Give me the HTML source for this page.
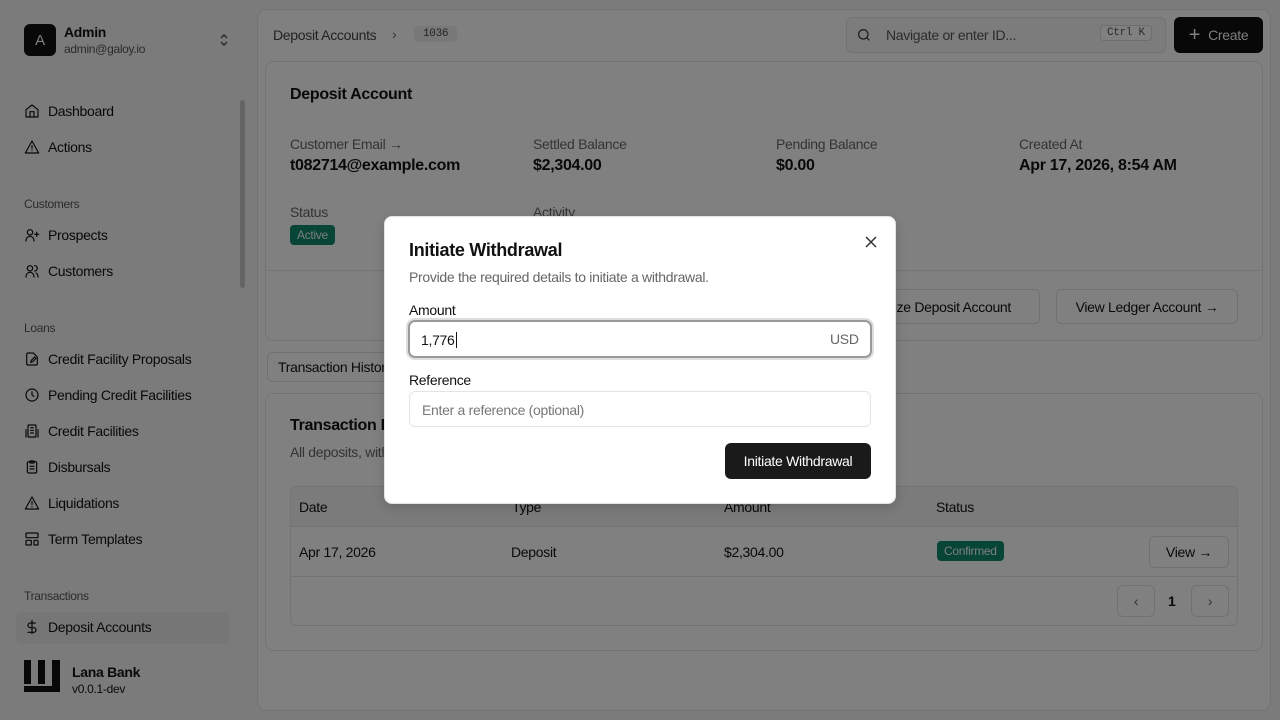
<!DOCTYPE html>
<html><head><meta charset="utf-8"><style>
*{box-sizing:border-box;margin:0;padding:0}
body{width:1280px;height:720px;overflow:hidden;background:#7b7b7b;font-family:"Liberation Sans",sans-serif;color:#090909;font-size:14px;position:relative;letter-spacing:-0.3px}
.abs{position:absolute}
.nav{position:absolute;left:24px;display:flex;align-items:center;gap:8px;font-size:14px;color:#090909}
.nav svg{width:16px;height:16px;fill:none;stroke:#090909;stroke-width:1.8;stroke-linecap:round;stroke-linejoin:round}
.sec{position:absolute;left:24px;font-size:12px;color:#2b2b2b}
.card{position:absolute;background:#808080;border:1px solid #737373;border-radius:8px}
.lbl{position:absolute;font-size:14px;color:#333}
.val{position:absolute;font-size:16px;font-weight:bold;color:#090909}
.btn{position:absolute;border:1px solid #717171;border-radius:6px;background:#808080;font-size:14px;display:flex;align-items:center;justify-content:center;gap:6px;color:#090909}
.badge{position:absolute;background:#074537;color:#7f7f7f;font-size:12px;border-radius:4px;padding:3px 7px}
</style></head><body>
<!-- sidebar -->
<div class="abs" style="left:24px;top:24px;width:32px;height:32px;background:#080808;border-radius:6px;color:#808080;display:flex;align-items:center;justify-content:center;font-size:15px">A</div>
<div class="abs" style="left:64px;top:24px;font-size:14px;font-weight:bold">Admin</div>
<div class="abs" style="left:64px;top:42px;font-size:12px;color:#2b2b2b">admin@galoy.io</div>
<svg class="abs" style="left:217px;top:32px" width="14" height="16" viewBox="0 0 14 16" fill="none" stroke="#2b2b2b" stroke-width="1.5"><path d="M4 6l3-3 3 3M4 10l3 3 3-3"/></svg>
<div class="abs" style="left:240px;top:100px;width:5px;height:188px;background:#646464;border-radius:3px"></div>
<div class="nav" style="top:103px"><svg viewBox="0 0 24 24"><path d="M3 10l9-7 9 7v10a1 1 0 0 1-1 1H4a1 1 0 0 1-1-1z"/><path d="M9 21v-8h6v8"/></svg>Dashboard</div>
<div class="nav" style="top:139px"><svg viewBox="0 0 24 24"><path d="M12 3l10 18H2z"/><path d="M12 10v4M12 17v.5"/></svg>Actions</div>
<div class="sec" style="top:197px">Customers</div>
<div class="nav" style="top:227px"><svg viewBox="0 0 24 24"><circle cx="9" cy="8" r="4"/><path d="M3 21v-1a6 6 0 0 1 12 0v1M19 8v6M16 11h6"/></svg>Prospects</div>
<div class="nav" style="top:263px"><svg viewBox="0 0 24 24"><circle cx="9" cy="8" r="4"/><path d="M3 21v-1a6 6 0 0 1 12 0v1M16 4a4 4 0 0 1 0 8M21 21v-1a6 6 0 0 0-3-5"/></svg>Customers</div>
<div class="sec" style="top:321px">Loans</div>
<div class="nav" style="top:351px"><svg viewBox="0 0 24 24"><path d="M14 3H6a2 2 0 0 0-2 2v14a2 2 0 0 0 2 2h12a2 2 0 0 0 2-2V9z"/><path d="M10 17l1-3 5-5 2 2-5 5z"/></svg>Credit Facility Proposals</div>
<div class="nav" style="top:387px"><svg viewBox="0 0 24 24"><circle cx="12" cy="12" r="9"/><path d="M12 7v5l3 2"/></svg>Pending Credit Facilities</div>
<div class="nav" style="top:423px"><svg viewBox="0 0 24 24"><rect x="6" y="3" width="12" height="18" rx="1"/><path d="M3 10v11M21 10v11M10 7h4M10 11h4M10 15h4"/></svg>Credit Facilities</div>
<div class="nav" style="top:459px"><svg viewBox="0 0 24 24"><rect x="5" y="4" width="14" height="17" rx="2"/><path d="M9 3h6v3H9zM9 11h6M9 15h6"/></svg>Disbursals</div>
<div class="nav" style="top:495px"><svg viewBox="0 0 24 24"><path d="M12 3l10 18H2z"/><path d="M12 10v4M12 17v.5"/></svg>Liquidations</div>
<div class="nav" style="top:531px"><svg viewBox="0 0 24 24"><rect x="3" y="3" width="18" height="7" rx="1"/><rect x="3" y="14" width="8" height="7" rx="1"/><rect x="15" y="14" width="6" height="7" rx="1"/></svg>Term Templates</div>
<div class="sec" style="top:589px">Transactions</div>
<div class="abs" style="left:16px;top:612px;width:214px;height:32px;background:#767676;border-radius:6px"></div>
<div class="nav" style="top:619px"><svg viewBox="0 0 24 24"><path d="M12 2v20M17 6H9.5a3.5 3.5 0 0 0 0 7h5a3.5 3.5 0 0 1 0 7H6"/></svg>Deposit Accounts</div>
<svg class="abs" style="left:24px;top:660px" width="36" height="32" viewBox="0 0 36 32"><rect x="0" y="0" width="7" height="24" fill="#080808"/><rect x="14" y="0" width="7" height="24" fill="#080808"/><rect x="28" y="0" width="8" height="32" fill="#080808"/><rect x="0" y="26" width="36" height="6" fill="#080808"/></svg>
<div class="abs" style="left:72px;top:664px;font-weight:bold;font-size:14px">Lana Bank</div>
<div class="abs" style="left:72px;top:682px;font-size:12px">v0.0.1-dev</div>
<!-- main -->
<div class="card" style="left:257px;top:9px;width:1014px;height:702px;border-radius:10px"></div>
<div class="abs" style="left:273px;top:27px;font-size:14px;color:#222">Deposit Accounts</div>
<div class="abs" style="left:392px;top:26px;color:#333">›</div>
<div class="abs" style="left:414px;top:26px;background:#787878;border-radius:4px;padding:2px 9px;font-family:'Liberation Mono',monospace;font-size:11px;color:#222">1036</div>
<div class="abs" style="left:846px;top:17px;width:320px;height:36px;border:1px solid #737373;border-radius:6px;background:#7c7c7c"></div>
<svg class="abs" style="left:856px;top:27px" width="16" height="16" viewBox="0 0 24 24" fill="none" stroke="#222" stroke-width="2"><circle cx="11" cy="11" r="7"/><path d="M20 20l-4-4"/></svg>
<div class="abs" style="left:886px;top:27px;color:#2b2b2b">Navigate or enter ID...</div>
<div class="abs" style="left:1100px;top:25px;border:1px solid #6e6e6e;border-radius:4px;padding:1px 6px;font-family:'Liberation Mono',monospace;font-size:11px;color:#2b2b2b;background:#808080">Ctrl K</div>
<div class="abs" style="left:1174px;top:17px;width:89px;height:36px;background:#080808;border-radius:6px;color:#808080;display:flex;align-items:center;justify-content:center;gap:8px;font-size:14px"><span style="font-size:20px;font-weight:300">+</span>Create</div>
<div class="card" style="left:265px;top:61px;width:998px;height:280px"></div>
<div class="abs" style="left:290px;top:86px;font-size:16px;font-weight:bold">Deposit Account</div>
<div class="lbl" style="left:290px;top:136px">Customer Email →</div>
<div class="val" style="left:290px;top:157px">t082714@example.com</div>
<div class="lbl" style="left:533px;top:136px">Settled Balance</div>
<div class="val" style="left:533px;top:157px">$2,304.00</div>
<div class="lbl" style="left:776px;top:136px">Pending Balance</div>
<div class="val" style="left:776px;top:157px">$0.00</div>
<div class="lbl" style="left:1019px;top:136px">Created At</div>
<div class="val" style="left:1019px;top:157px">Apr 17, 2026, 8:54 AM</div>
<div class="lbl" style="left:290px;top:204px">Status</div>
<div class="badge" style="left:290px;top:225px">Active</div>
<div class="lbl" style="left:533px;top:204px">Activity</div>
<div class="abs" style="left:266px;top:270px;width:996px;height:1px;background:#747474"></div>
<div class="btn" style="left:840px;top:289px;width:200px;height:35px">Freeze Deposit Account</div>
<div class="btn" style="left:1056px;top:289px;width:182px;height:35px">View Ledger Account →</div>
<div class="btn" style="left:267px;top:352px;width:140px;height:30px;justify-content:flex-start;padding-left:10px">Transaction History</div>
<div class="card" style="left:265px;top:393px;width:998px;height:258px"></div>
<div class="abs" style="left:290px;top:417px;font-size:16px;font-weight:bold">Transaction History</div>
<div class="abs" style="left:290px;top:444px;color:#333">All deposits, withdrawals</div>
<div class="abs" style="left:290px;top:486px;width:948px;height:140px;border:1px solid #737373;border-radius:6px"></div>
<div class="abs" style="left:291px;top:487px;width:946px;height:40px;background:#7b7b7b;border-bottom:1px solid #737373;border-radius:6px 6px 0 0"></div>
<div class="abs" style="left:299px;top:499px">Date</div>
<div class="abs" style="left:512px;top:499px">Type</div>
<div class="abs" style="left:724px;top:499px">Amount</div>
<div class="abs" style="left:936px;top:499px">Status</div>
<div class="abs" style="left:299px;top:544px">Apr 17, 2026</div>
<div class="abs" style="left:511px;top:544px">Deposit</div>
<div class="abs" style="left:724px;top:544px">$2,304.00</div>
<div class="badge" style="left:937px;top:541px">Confirmed</div>
<div class="btn" style="left:1149px;top:536px;width:80px;height:32px">View →</div>
<div class="abs" style="left:291px;top:576px;width:946px;height:1px;background:#737373"></div>
<div class="btn" style="left:1117px;top:585px;width:38px;height:32px;color:#333">‹</div>
<div class="abs" style="left:1168px;top:593px;font-weight:bold">1</div>
<div class="btn" style="left:1191px;top:585px;width:38px;height:32px;color:#333">›</div>
<!-- modal -->
<div class="abs" style="left:384px;top:216px;width:512px;height:288px;background:#fff;border-radius:8px;border:1px solid #e4e4e4;box-shadow:0 4px 12px rgba(0,0,0,0.15)"></div>
<div class="abs" style="left:409px;top:240px;font-size:18px;font-weight:bold;color:#111">Initiate Withdrawal</div>
<svg class="abs" style="left:864px;top:235px" width="14" height="14" viewBox="0 0 14 14" stroke="#333" stroke-width="1.5"><path d="M2 2l10 10M12 2L2 12"/></svg>
<div class="abs" style="left:409px;top:269px;color:#666">Provide the required details to initiate a withdrawal.</div>
<div class="abs" style="left:409px;top:302px;color:#111">Amount</div>
<div class="abs" style="left:408px;top:320px;width:464px;height:38px;border:2px solid #999;border-radius:7px;box-shadow:0 0 0 2px #ddd"></div>
<div class="abs" style="left:421px;top:332px;color:#111">1,776<span style="border-left:1px solid #111;margin-left:1px"></span></div>
<div class="abs" style="left:830px;top:331px;color:#666">USD</div>
<div class="abs" style="left:409px;top:372px;color:#111">Reference</div>
<div class="abs" style="left:409px;top:391px;width:462px;height:36px;border:1px solid #e4e4e4;border-radius:6px"></div>
<div class="abs" style="left:422px;top:402px;color:#777">Enter a reference (optional)</div>
<div class="abs" style="left:725px;top:443px;width:146px;height:36px;background:#1a1a1a;border-radius:6px;color:#fff;display:flex;align-items:center;justify-content:center">Initiate Withdrawal</div>
</body></html>
